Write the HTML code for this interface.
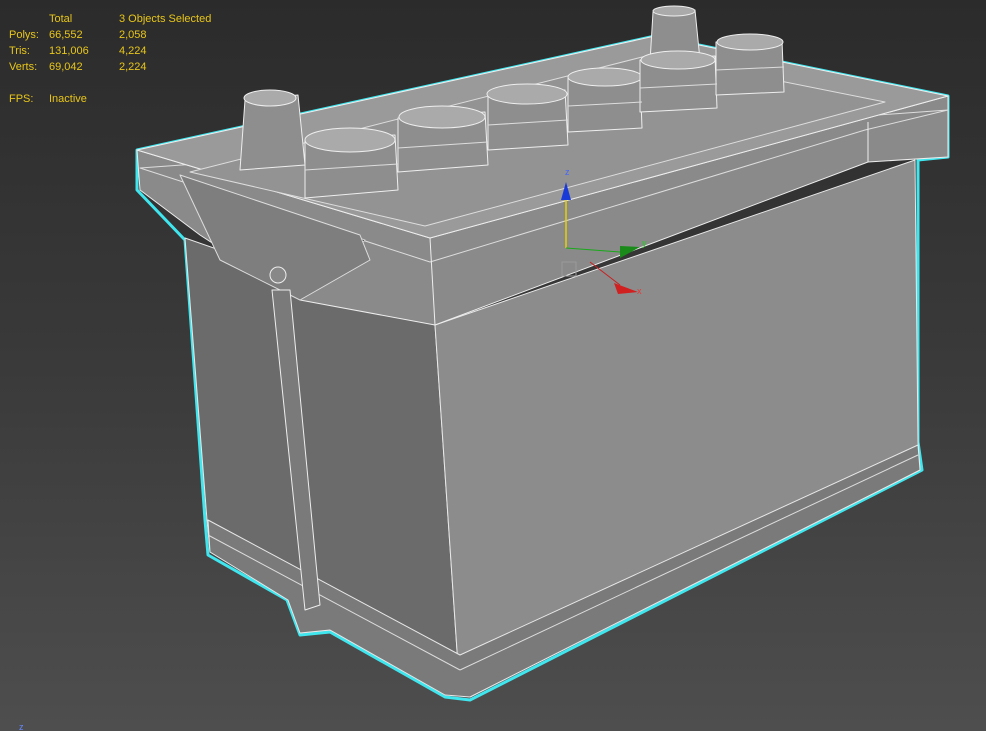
<!DOCTYPE html>
<html><head><style>
html,body{margin:0;padding:0}
body{width:986px;height:731px;overflow:hidden;background:linear-gradient(180deg,#2b2b2b 0%,#3a3a3a 50%,#4e4e4e 100%);font-family:"Liberation Sans",sans-serif;position:relative}
.t{position:absolute;color:#e8c619;font-size:11px;line-height:16px}
svg{position:absolute;left:0;top:0}
</style></head><body>
<svg width="986" height="731" viewBox="0 0 986 731">
<g stroke-linejoin="round">
<polygon points="137,150 655,36 948,96 948,157 918,160 918,442 922,470 470,700 445,697 330,632 300,635 287,600 208,555 205,520 185,240 137,190" fill="none" stroke="#40e6ee" stroke-width="3"/>
<polygon points="185,238 435,325 460,695 330,630 300,633 290,600 210,552 207,520" fill="#6b6b6b" stroke="#e8e8e8" stroke-width="1"/>
<polygon points="435,325 915,160 918,442 920,470 470,697 460,695" fill="#8c8c8c" stroke="#e8e8e8" stroke-width="1"/>
<polygon points="208,520 460,655 918,445 920,470 470,697 445,695 330,630 300,633 288,600 210,552" fill="#7a7a7a" stroke="#e8e8e8" stroke-width="1"/>
<line x1="208" y1="535" x2="460" y2="670" stroke="#ddd"/>
<line x1="460" y1="670" x2="918" y2="455" stroke="#ddd"/>
<polygon points="137,150 430,238 948,96 948,157 868,162 435,325 300,300 200,235 140,190" fill="#8a8a8a" stroke="#eee" stroke-width="1"/>
<polygon points="140,168 430,262 865,130 948,110" fill="none" stroke="#ddd"/>
<line x1="430" y1="238" x2="435" y2="325" stroke="#eee"/>
<line x1="868" y1="162" x2="868" y2="122" stroke="#eee"/>
<polygon points="137,150 655,36 948,96 430,238" fill="#9a9a9a" stroke="#eee" stroke-width="1"/>
<polygon points="190,172 650,55 885,102 425,226" fill="#939393" stroke="#ddd" stroke-width="1"/>
<polygon points="200,185 365,240 350,255 200,205" fill="#222" stroke="#ccc"/>
<polygon points="180,175 360,235 370,260 300,300 220,260" fill="#7e7e7e" stroke="#ddd"/>
<polygon points="272,290 290,290 320,605 305,610" fill="#7a7a7a" stroke="#eee"/>
<circle cx="278" cy="275" r="8" fill="#888" stroke="#eee"/>
<g fill="#8e8e8e" stroke="#eee">
<polygon points="245,100 298,95 305,165 240,170"/><ellipse cx="270" cy="98" rx="26" ry="8" fill="#aaa"/>
<polygon points="653,12 695,10 700,60 650,62"/><ellipse cx="674" cy="11" rx="21" ry="5" fill="#aaa"/>
<polygon points="305,140 395,135 398,190 305,198"/><ellipse cx="350" cy="140" rx="45" ry="12" fill="#aaa"/>
<polygon points="398,118 485,112 488,165 398,172"/><ellipse cx="442" cy="117" rx="43" ry="11" fill="#aaa"/>
<polygon points="488,95 565,90 568,145 488,150"/><ellipse cx="527" cy="94" rx="40" ry="10" fill="#aaa"/>
<polygon points="568,78 640,74 642,128 568,132"/><ellipse cx="605" cy="77" rx="37" ry="9" fill="#aaa"/>
<polygon points="640,60 715,56 717,108 640,112"/><ellipse cx="678" cy="60" rx="37" ry="9" fill="#aaa"/>
<polygon points="716,42 782,40 784,92 716,95"/><ellipse cx="750" cy="42" rx="33" ry="8" fill="#aaa"/>
</g>
<g fill="none" stroke="#ddd">
<path d="M305,170 L398,164 M398,148 L488,142 M488,125 L568,120 M568,106 L642,102 M640,88 L717,84 M716,70 L784,67"/>
</g>
<line x1="566" y1="200" x2="566" y2="248" stroke="#e8d000" stroke-width="1.5"/>
<polygon points="561,200 571,200 566,182" fill="#1a3ad8"/>
<line x1="566" y1="248" x2="620" y2="252" stroke="#1aa81a"/>
<polygon points="620,246 640,247 620,258" fill="#1a8a1a"/>
<line x1="590" y1="262" x2="620" y2="285" stroke="#c82020"/>
<polygon points="614,283 638,292 618,294" fill="#d02020"/>
<rect x="562" y="262" width="14" height="14" fill="none" stroke="#999"/>
</g>
<text x="565" y="175" fill="#4466ff" font-size="9" font-family="Liberation Sans">z</text>
<text x="642" y="246" fill="#22cc22" font-size="9" font-family="Liberation Sans">y</text>
<text x="637" y="294" fill="#ee3333" font-size="9" font-family="Liberation Sans">x</text>
<text x="19" y="730" fill="#6688ff" font-size="9" font-family="Liberation Sans">z</text>
</svg>
<div class="t" style="left:49px;top:11px">Total</div>
<div class="t" style="left:119px;top:11px">3 Objects Selected</div>
<div class="t" style="left:9px;top:27px">Polys:</div><div class="t" style="left:49px;top:27px">66,552</div><div class="t" style="left:119px;top:27px">2,058</div>
<div class="t" style="left:9px;top:43px">Tris:</div><div class="t" style="left:49px;top:43px">131,006</div><div class="t" style="left:119px;top:43px">4,224</div>
<div class="t" style="left:9px;top:59px">Verts:</div><div class="t" style="left:49px;top:59px">69,042</div><div class="t" style="left:119px;top:59px">2,224</div>
<div class="t" style="left:9px;top:91px">FPS:</div><div class="t" style="left:49px;top:91px">Inactive</div>
</body></html>
